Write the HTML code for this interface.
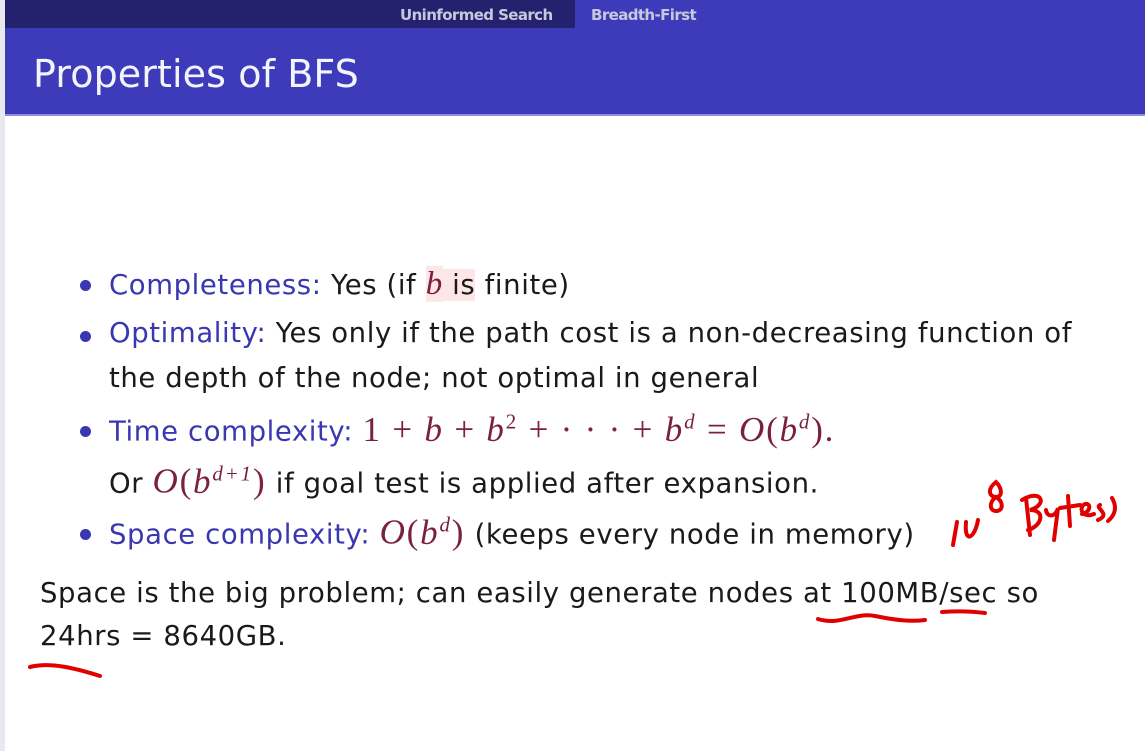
<!DOCTYPE html>
<html><head><style>
body{margin:0;width:1145px;height:751px;background:#fff;position:relative;overflow:hidden;font-family:"DejaVu Sans","Liberation Sans",sans-serif;color:#1a1a1a}
.bar{position:absolute;left:5px;top:0;width:1140px;height:28px;background:#24226e}
.bar2{position:absolute;left:575px;top:0;width:570px;height:28px;background:#3e3bbb}
.nav{position:absolute;top:6px;font-size:15px;font-weight:bold;color:#c8c8dc;letter-spacing:-0.6px}
.title{position:absolute;left:5px;top:28px;width:1140px;height:86px;background:#3e3bbb;border-bottom:2px solid #8f8ee0}
.title span{position:absolute;left:28px;top:24px;font-size:38px;color:#f4f4ff;letter-spacing:0.1px}
.edge{position:absolute;left:0;top:0;width:5px;height:751px;background:#e8e8ee}
.l{position:absolute;font-size:27.5px;white-space:nowrap;letter-spacing:0.6px}
.b{color:#3a38b0}
.m{color:#7a2040;font-family:"Liberation Serif",serif;font-size:35px;letter-spacing:1.8px}
.mi{color:#7a2040;font-family:"Liberation Serif",serif;font-style:italic;font-size:33px}
.m sup{font-size:21px}
.dot{position:absolute;left:80px;width:11px;height:11px;border-radius:50%;background:#3a38b0}
</style></head><body>
<div class="edge"></div>
<div class="bar"></div><div class="bar2"></div>
<div class="nav" style="left:400px">Uninformed Search</div>
<div class="nav" style="left:591px">Breadth-First</div>
<div class="title"><span>Properties of BFS</span></div>

<div class="dot" style="top:280px"></div>
<div class="l" style="left:109px;top:266px"><span class="b">Completeness:</span> Yes (if <span class="mi" style="background:#fde6e6">b</span><span style="background:#fde6e6"> is</span> finite)</div>
<div class="dot" style="top:331px"></div>
<div class="l" style="left:109px;top:317px"><span class="b">Optimality:</span> Yes only if the path cost is a non-decreasing function of</div>
<div class="l" style="left:109px;top:362px">the depth of the node; not optimal in general</div>
<div class="dot" style="top:426px"></div>
<div class="l" style="left:109px;top:409px"><span class="b">Time complexity:</span> <span class="m">1 + <i>b</i> + <i>b</i><sup>2</sup> + · · · + <i>b<sup>d</sup></i> = <i>O</i>(<i>b<sup>d</sup></i>).</span></div>
<div class="l" style="left:109px;top:461px">Or <span class="m"><i>O</i>(<i>b<sup>d+1</sup></i>)</span> if goal test is applied after expansion.</div>
<div class="dot" style="top:529px"></div>
<div class="l" style="left:109px;top:512px"><span class="b">Space complexity:</span> <span class="m"><i>O</i>(<i>b<sup>d</sup></i>)</span> (keeps every node in memory)</div>
<div class="l" style="left:40px;top:577px">Space is the big problem; can easily generate nodes at 100MB/sec so</div>
<div class="l" style="left:40px;top:620px">24hrs = 8640GB.</div>

<svg style="position:absolute;left:0;top:0" width="1145" height="751" fill="none" stroke="#e00000" stroke-width="4" stroke-linecap="round">
<path d="M818 619 C840 626 855 612 875 616 C895 620 910 622 925 620"/>
<path d="M942 612 C955 611 970 611 985 613"/>
<path d="M30 667 C50 662 75 668 100 676"/>
<path d="M957 522 L953 545"/>
<path d="M966 522 C964 545 975 538 978 520"/>
<path d="M996 482 C986 490 990 497 996 497 C1003 497 1002 488 996 482 Z M996 497 C988 503 990 512 997 511 C1004 510 1003 501 996 497"/>
<path d="M1026 498 L1030 535 M1022 500 C1042 488 1048 505 1030 510 C1046 510 1042 526 1028 530"/>
<path d="M1046 510 C1047 518 1056 517 1058 508 L1054 540"/>
<path d="M1068 496 L1070 526 M1060 508 L1080 505"/>
<path d="M1082 514 C1090 513 1092 503 1085 504 C1078 507 1082 519 1094 514"/>
<path d="M1100 505 C1094 508 1112 514 1098 520 M1112 498 C1118 508 1114 516 1108 521"/>
</svg>
</body></html>
